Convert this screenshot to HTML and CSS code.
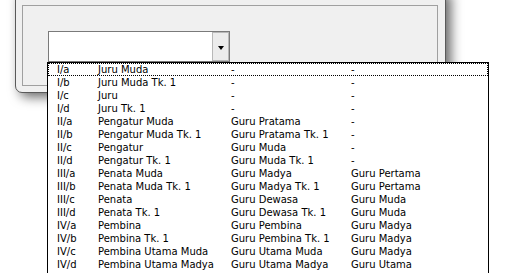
FILE: index.html
```html
<!DOCTYPE html>
<html>
<head>
<meta charset="utf-8">
<link rel="stylesheet" href="styles.css">
</head>
<body>
<div class="window">
  <div class="panel">
    <div class="combo">
      <div class="combo-text"></div>
      <div class="combo-btn"><span class="arrow"></span></div>
    </div>
  </div>
</div>
<div class="list">
  <div class="row focus"><span>I/a</span><span>Juru Muda</span><span>-</span><span>-</span></div>
  <div class="row"><span>I/b</span><span>Juru Muda Tk. 1</span><span>-</span><span>-</span></div>
  <div class="row"><span>I/c</span><span>Juru</span><span>-</span><span>-</span></div>
  <div class="row"><span>I/d</span><span>Juru Tk. 1</span><span>-</span><span>-</span></div>
  <div class="row"><span>II/a</span><span>Pengatur Muda</span><span>Guru Pratama</span><span>-</span></div>
  <div class="row"><span>II/b</span><span>Pengatur Muda Tk. 1</span><span>Guru Pratama Tk. 1</span><span>-</span></div>
  <div class="row"><span>II/c</span><span>Pengatur</span><span>Guru Muda</span><span>-</span></div>
  <div class="row"><span>II/d</span><span>Pengatur Tk. 1</span><span>Guru Muda Tk. 1</span><span>-</span></div>
  <div class="row"><span>III/a</span><span>Penata Muda</span><span>Guru Madya</span><span>Guru Pertama</span></div>
  <div class="row"><span>III/b</span><span>Penata Muda Tk. 1</span><span>Guru Madya Tk. 1</span><span>Guru Pertama</span></div>
  <div class="row"><span>III/c</span><span>Penata</span><span>Guru Dewasa</span><span>Guru Muda</span></div>
  <div class="row"><span>III/d</span><span>Penata Tk. 1</span><span>Guru Dewasa Tk. 1</span><span>Guru Muda</span></div>
  <div class="row"><span>IV/a</span><span>Pembina</span><span>Guru Pembina</span><span>Guru Madya</span></div>
  <div class="row"><span>IV/b</span><span>Pembina Tk. 1</span><span>Guru Pembina Tk. 1</span><span>Guru Madya</span></div>
  <div class="row"><span>IV/c</span><span>Pembina Utama Muda</span><span>Guru Utama Muda</span><span>Guru Madya</span></div>
  <div class="row"><span>IV/d</span><span>Pembina Utama Madya</span><span>Guru Utama Madya</span><span>Guru Utama</span></div>
</div>
</body>
</html>
```
FILE: styles.css
```css
html, body {
  margin: 0;
  padding: 0;
  background: #ffffff;
  overflow: hidden;
  width: 521px;
  height: 273px;
}
body {
  position: relative;
  font-family: "DejaVu Sans", "Liberation Sans", sans-serif;
  font-size: 10px;
  color: #000;
}
.window {
  box-sizing: border-box;
  margin-left: 15px;
  margin-top: -10px;
  width: 431px;
  height: 103px;
  border: 1px solid #5a5a5a;
  border-radius: 0 0 7px 7px;
  background: #f0f0f0;
  padding: 14px 0 0 6px;
  box-shadow: 5px 4px 12px rgba(0, 0, 0, 0.6);
}
.panel {
  box-sizing: border-box;
  width: 416px;
  height: 81px;
  border: 1px solid #a0a0a0;
  padding: 25px 0 0 25px;
}
.combo {
  box-sizing: border-box;
  display: flex;
  width: 182px;
  height: 31px;
  border: 1px solid #7a7a7a;
  background: #ffffff;
}
.combo-text {
  flex: 1;
}
.combo-btn {
  box-sizing: border-box;
  width: 17px;
  border: 1px solid #b8b8b8;
  background: #ececec;
  display: flex;
  align-items: center;
  justify-content: center;
}
.arrow {
  width: 0;
  height: 0;
  border-left: 3px solid transparent;
  border-right: 3px solid transparent;
  border-top: 4px solid #000;
  margin-top: 2px;
}
.list {
  position: absolute;
  left: 47px;
  top: 62px;
  width: 442px;
  height: 211px;
  box-sizing: border-box;
  border: 1px solid #000;
  border-bottom: none;
  background: #ffffff;
  overflow: hidden;
}
.row {
  box-sizing: border-box;
  display: grid;
  grid-template-columns: 41px 133px 120px 1fr;
  height: 13px;
  line-height: 13px;
  padding-left: 9px;
  white-space: nowrap;
}
.row.focus {
  outline: 1px dotted #000;
  outline-offset: -1px;
}
```
